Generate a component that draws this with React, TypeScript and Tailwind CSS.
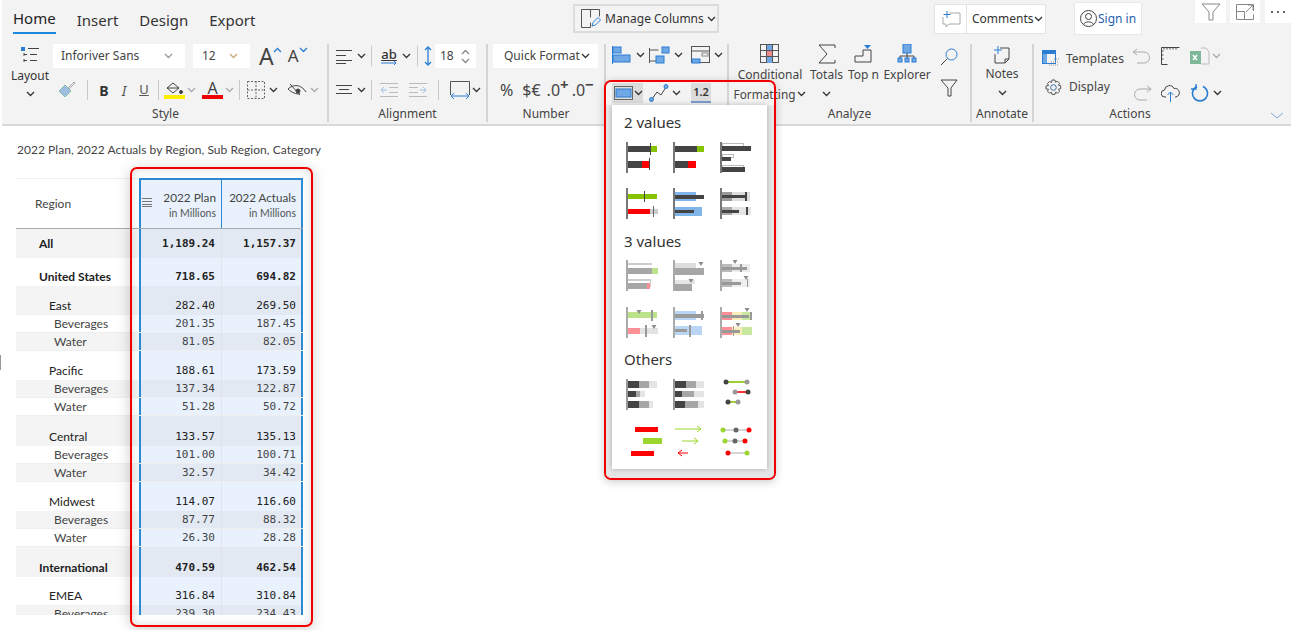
import React from "react";

const ui = "font-['Noto_Sans',sans-serif]";
const tableFont = "font-['Lato',sans-serif]";
const mono = "font-['DejaVu_Sans_Mono',monospace]";

const BLUE = "#2b7cd3";
const FILL = "#6fa8e4";
const INK = "#444";

const Chev = ({ c = "#333", className = "" }: { c?: string; className?: string }) => (
	<svg width="9" height="6" viewBox="0 0 9 6" className={`shrink-0 ${className}`}>
		<path d="M1 1l3.5 3.5L8 1" fill="none" stroke={c} strokeWidth="1.3" />
	</svg>
);

const Sep = ({ className = "" }: { className?: string }) => (
	<div className={`w-[1px] h-[20px] bg-[#c8c8c8] shrink-0 ${className}`} />
);

const Ico = ({ w, h, className = "", children }: { w: number; h: number; className?: string; children: React.ReactNode }) => (
	<svg width={w} height={h} viewBox={`0 0 ${w} ${h}`} fill="none" stroke={INK} strokeWidth="1" className={`shrink-0 ${className}`}>
		{children}
	</svg>
);

const Group = ({ className, label, labelClass = "", children }: { className: string; label?: string; labelClass?: string; children: React.ReactNode }) => (
	<div className={`flex flex-col shrink-0 h-[78px] border-r-2 border-[#d4d4d4] ${className}`}>
		<div className="h-[60px] flex">{children}</div>
		{label && <div className={`h-[18px] text-center text-[12px] leading-[20px] text-[#444] ${labelClass}`}>{label}</div>}
	</div>
);

// ---- mini charts in the dropdown ----
const D = "#444";
const M = "#a6a6a6";
const L = "#e4e4e4";
const G = "#86c400";
const R = "#ff0000";
const LG = "#bde38a";
const LR = "#ff8f97";
const LB = "#b9d7f5";
const B = "#7fb5e8";

type Rect = (number | string)[];

const Bars = ({ items, axis = "#777" }: { items: Rect[]; axis?: string }) => (
	<>
		<rect x="0" y="0" width="2" height="31" fill={axis} />
		{items.map((r, i) => (
			<rect key={i} x={r[0]} y={r[1]} width={r[2]} height={r[3]} fill={String(r[4])} />
		))}
	</>
);

const Tri = ({ x, y }: { x: number; y: number }) => <path d={`M${x - 2.5} ${y}h5l-2.5 4z`} fill="#8c8c8c" />;
const Chart = ({ children }: { children: React.ReactNode }) => (
	<svg width="40" height="31" viewBox="0 0 40 31" className="overflow-visible">
		{children}
	</svg>
);

const Dumb = ({ pts, line, y }: { pts: [number, string][]; line: string; y: number }) => (
	<>
		<line x1={pts[0][0]} x2={pts[pts.length - 1][0]} y1={y} y2={y} stroke={line} strokeWidth="1.6" />
		{pts.map((p, i) => (
			<circle key={i} cx={p[0]} cy={y} r="2.5" fill={p[1]} />
		))}
	</>
);

const Arrow = ({ x1, x2, y, c }: { x1: number; x2: number; y: number; c: string }) => {
	const d = x2 > x1 ? -4 : 4;
	return <path d={`M${x1} ${y}H${x2}m${d} -3l${-d} 3l${d} 3`} fill="none" stroke={c} strokeWidth="1" />;
};

const twoValues = [
	<Bars items={[[2, 4, 23, 6, D], [25, 4, 6, 6, G], [24, 1, 1, 12, D], [2, 19, 14, 7, D], [16, 19, 8, 7, R], [23, 16, 1, 12, D]]} />,
	<Bars items={[[2, 4, 23, 6, D], [24, 4, 7, 6, G], [2, 19, 13, 7, D], [15, 19, 8, 7, R]]} />,
	<Bars items={[[2, 1, 22, 3, "#bbb"], [3, 2, 20, 2, "#fff"], [2, 4, 29, 5, D], [2, 12, 12, 4, "#bbb"], [3, 13, 10, 2, "#fff"], [2, 15, 9, 4, D], [2, 23, 22, 3, "#bbb"], [3, 24, 20, 1, "#fff"], [2, 25, 23, 5, D]]} />,
	<Bars items={[[2, 6, 29, 5, G], [18, 3, 1, 11, D], [2, 21, 22, 5, R], [24, 21, 8, 5, "#ccc"], [27, 18, 1, 11, "#666"]]} />,
	<Bars items={[[2, 4, 21, 9, B], [2, 7, 29, 4, D], [2, 19, 27, 9, B], [2, 22, 19, 3, D]]} />,
	<Bars items={[[2, 4, 28, 9, "#ddd"], [2, 4, 10, 9, "#999"], [2, 7, 25, 3, D], [25, 4, 2, 9, D], [2, 19, 29, 8, L], [2, 19, 10, 8, "#aaa"], [2, 22, 17, 3, D], [26, 19, 2, 8, D]]} />,
];

const threeValues = [
	<Bars axis="#aaa" items={[[2, 3, 24, 2, "#ccc"], [2, 8, 24, 6, M], [26, 8, 6, 6, LG], [2, 19, 22, 2, "#ccc"], [2, 23, 19, 6, M], [21, 23, 3, 6, LR], [24, 19, 1, 8, "#ccc"]]} />,
	<>
		<Bars axis="#aaa" items={[[2, 3, 21, 5, "#ddd"], [2, 8, 29, 7, M], [2, 20, 20, 4, "#e6e6e6"], [2, 24, 17, 7, M]]} />
		<Tri x={28} y={2} />
		<Tri x={18} y={19} />
	</>,
	<>
		<Bars axis="#aaa" items={[[2, 4, 28, 8, "#ebebeb"], [2, 4, 10, 8, "#bbb"], [2, 7, 25, 3, "#999"], [20, 4, 2, 8, "#999"], [2, 19, 28, 8, "#efefef"], [2, 19, 10, 8, "#bbb"], [2, 22, 19, 3, "#999"], [27, 19, 1, 8, "#999"]]} />
		<Tri x={15} y={0} />
		<Tri x={26} y={16} />
	</>,
	<>
		<Bars axis="#aaa" items={[[2, 5, 29, 6, LG], [25, 3, 2, 11, "#999"], [2, 21, 12, 6, LR], [14, 21, 18, 6, "#e2e2e2"], [19, 18, 2, 12, "#999"]]} />
		<Tri x={13} y={3} />
		<Tri x={28} y={18} />
	</>,
	<Bars axis="#aaa" items={[[2, 4, 21, 9, LB], [2, 7, 29, 4, "#9a9a9a"], [28, 4, 2, 9, "#9a9a9a"], [2, 19, 27, 9, LB], [2, 22, 12, 3, "#9a9a9a"], [16, 18, 2, 12, "#9a9a9a"]]} />,
	<>
		<Bars axis="#aaa" items={[[2, 5, 10, 8, LR], [12, 5, 10, 8, "#fbeeb8"], [22, 5, 10, 8, "#c8e8a0"], [2, 8, 27, 3, "#999"], [30, 5, 2, 8, "#999"], [2, 20, 10, 8, LR], [12, 20, 10, 8, "#fbeeb8"], [22, 20, 10, 8, "#c8e8a0"], [2, 23, 18, 3, "#999"], [13, 19, 1, 10, "#999"]]} />
		<Tri x={27} y={1} />
		<Tri x={18} y={16} />
	</>,
];

const others = [
	<Bars axis="#999" items={[[2, 2, 11, 7, D], [13, 2, 10, 7, M], [23, 2, 8, 7, L], [2, 12, 8, 6, D], [10, 12, 4, 6, M], [14, 12, 5, 6, L], [2, 22, 11, 7, D], [13, 22, 10, 7, M], [23, 22, 4, 7, L]]} />,
	<Bars axis="#999" items={[[2, 2, 11, 7, D], [13, 2, 10, 7, M], [23, 2, 8, 7, L], [2, 12, 7, 6, D], [9, 12, 12, 6, M], [21, 12, 10, 6, L], [2, 22, 10, 7, D], [12, 22, 13, 7, M], [25, 22, 6, 7, L]]} />,
	<>
		<Dumb y={3} line={G} pts={[[6, D], [27, "#999"]]} />
		<Dumb y={13} line={R} pts={[[15, "#999"], [28, D]]} />
		<Dumb y={23} line={G} pts={[[8, D], [18, "#999"]]} />
	</>,
	<>
		<rect x="9" y="0" width="23" height="5" fill={R} />
		<rect x="17" y="11" width="19" height="6" fill="#9bd62f" />
		<rect x="5" y="24" width="23" height="5" fill={R} />
	</>,
	<>
		<Arrow x1={2} x2={28} y={2} c="#9bd62f" />
		<Arrow x1={9} x2={25} y={14} c="#9bd62f" />
		<Arrow x1={15} x2={5} y={26} c={R} />
	</>,
	<>
		<Dumb y={3} line="#ccc" pts={[[3, "#9bd62f"], [16, "#666"], [29, R]]} />
		<Dumb y={14} line="#ccc" pts={[[5, "#9bd62f"], [15, "#666"], [25, R]]} />
		<Dumb y={26} line="#ccc" pts={[[8, R], [27, "#9bd62f"]]} />
	</>,
];

const ChartGrid = ({ charts, top, gap }: { charts: React.ReactNode[]; top: string; gap: string }) => (
	<div className={`grid grid-cols-[47px_47px_47px] ${top} ${gap}`}>
		{charts.map((c, i) => (
			<Chart key={i}>{c}</Chart>
		))}
	</div>
);

const ChartMenu = () => (
	<div className={`absolute left-[612px] top-[105px] w-[155px] h-[364px] bg-white shadow-[0_0_5px_rgba(0,0,0,0.25)] pl-[14px] pt-[7px] ${ui}`}>
		<div className="h-[20px] -ml-[2px] text-[15px] leading-[20px] text-[#333]">2 values</div>
		<ChartGrid charts={twoValues} top="mt-[10px]" gap="gap-y-[15px]" />
		<div className="h-[20px] -ml-[2px] mt-[12px] text-[15px] leading-[20px] text-[#333]">3 values</div>
		<ChartGrid charts={threeValues} top="mt-[9px]" gap="gap-y-[16px]" />
		<div className="h-[20px] -ml-[2px] mt-[11px] text-[15px] leading-[20px] text-[#333]">Others</div>
		<ChartGrid charts={others} top="mt-[10px]" gap="gap-y-[17px]" />
	</div>
);

// ---- table ----
const rows: { l: string; p: string; a: string; h: string; pad: string; kind: "top" | "mid" | "leaf"; shade: boolean }[] = [
	{ l: "All", p: "1,189.24", a: "1,157.37", h: "h-[29px]", pad: "pb-[6px]", kind: "top", shade: true },
	{ l: "United States", p: "718.65", a: "694.82", h: "h-[28px]", pad: "pb-[1px]", kind: "top", shade: false },
	{ l: "East", p: "282.40", a: "269.50", h: "h-[29px]", pad: "pb-[1px]", kind: "mid", shade: true },
	{ l: "Beverages", p: "201.35", a: "187.45", h: "h-[18px]", pad: "", kind: "leaf", shade: false },
	{ l: "Water", p: "81.05", a: "82.05", h: "h-[18px]", pad: "", kind: "leaf", shade: true },
	{ l: "Pacific", p: "188.61", a: "173.59", h: "h-[29px]", pad: "pb-[1px]", kind: "mid", shade: false },
	{ l: "Beverages", p: "137.34", a: "122.87", h: "h-[18px]", pad: "", kind: "leaf", shade: true },
	{ l: "Water", p: "51.28", a: "50.72", h: "h-[18px]", pad: "", kind: "leaf", shade: false },
	{ l: "Central", p: "133.57", a: "135.13", h: "h-[30px]", pad: "pb-[1px]", kind: "mid", shade: true },
	{ l: "Beverages", p: "101.00", a: "100.71", h: "h-[18px]", pad: "", kind: "leaf", shade: false },
	{ l: "Water", p: "32.57", a: "34.42", h: "h-[18px]", pad: "", kind: "leaf", shade: true },
	{ l: "Midwest", p: "114.07", a: "116.60", h: "h-[29px]", pad: "pb-[1px]", kind: "mid", shade: false },
	{ l: "Beverages", p: "87.77", a: "88.32", h: "h-[18px]", pad: "", kind: "leaf", shade: true },
	{ l: "Water", p: "26.30", a: "28.28", h: "h-[18px]", pad: "", kind: "leaf", shade: false },
	{ l: "International", p: "470.59", a: "462.54", h: "h-[30px]", pad: "pb-[1px]", kind: "top", shade: true },
	{ l: "EMEA", p: "316.84", a: "310.84", h: "h-[28px]", pad: "pb-[1px]", kind: "mid", shade: false },
	{ l: "Beverages", p: "239.30", a: "234.43", h: "h-[18px]", pad: "", kind: "leaf", shade: true },
];

const labelClass = { top: "pl-[23px] font-bold text-[#222]", mid: "pl-[33px] text-[#222]", leaf: "pl-[38px] text-[#444]" };
const numClass = { top: "font-bold text-[#222]", mid: "text-[#222]", leaf: "text-[#444]" };

const Table = () => (
	<div className={`ml-[16px] mt-[19px] w-[287px] h-[437px] overflow-hidden text-[12px] ${tableFont}`}>
		<div className="flex h-[51px] border-b border-[#aaa]">
			<div className="w-[123px] border-t border-[#eee] flex items-center pl-[19px] text-[#444]">Region</div>
			<div className="w-[83px] border-2 border-b-0 border-r border-[#2d8bd6] bg-[#e8f1fc] flex flex-col items-end pr-[5px] pt-[9px] relative">
				<svg width="11" height="9" viewBox="0 0 11 9" className="absolute left-[1px] top-[18px]" stroke="#777" strokeWidth="1">
					<path d="M0 .5h10M0 3.5h10M0 6.5h10M0 8.5h10" />
				</svg>
				<span className="leading-[18px] text-[11.8px] text-[#444]">2022 Plan</span>
				<span className="text-[10.5px] leading-[12px] text-[#555]">in Millions</span>
			</div>
			<div className="w-[81px] border-t-2 border-r-2 border-[#2d8bd6] bg-[#e8f1fc] flex flex-col items-end pr-[5px] pt-[9px]">
				<span className="leading-[18px] text-[11.6px] text-[#444]">2022 Actuals</span>
				<span className="text-[10.5px] leading-[12px] text-[#555]">in Millions</span>
			</div>
		</div>
		{rows.map((r, i) => (
			<div key={i} className={`flex ${r.h} ${r.kind === "leaf" ? "border-b border-[#eee]" : ""}`}>
				<div className={`w-[123px] flex items-end ${r.pad} ${r.kind === "leaf" ? "items-center" : ""} ${r.shade ? "bg-[#f4f4f4]" : "bg-white"} ${labelClass[r.kind]}`}>
					<span className="leading-[16px]">{r.l}</span>
				</div>
				<div className={`w-[83px] border-l-2 border-r border-l-[#2d8bd6] border-r-[#dde4ee] flex items-end justify-end pr-[6px] ${r.pad} ${r.kind === "leaf" ? "items-center" : ""} ${r.shade ? "bg-[#e2e9f2]" : "bg-[#e8f1fc]"}`}>
					<span className={`${mono} text-[11px] leading-[16px] ${numClass[r.kind]}`}>{r.p}</span>
				</div>
				<div className={`w-[81px] border-r-2 border-[#2d8bd6] flex items-end justify-end pr-[5px] ${r.pad} ${r.kind === "leaf" ? "items-center" : ""} ${r.shade ? "bg-[#e2e9f2]" : "bg-[#e8f1fc]"}`}>
					<span className={`${mono} text-[11px] leading-[16px] ${numClass[r.kind]}`}>{r.a}</span>
				</div>
			</div>
		))}
	</div>
);

// ---- ribbon ----
const Ribbon = () => (
	<div className={`h-[126px] ml-[2px] bg-[#f3f3f3] border-b-2 border-[#d8d8d8] text-[#333] ${ui}`}>
		<div className="h-[44px] flex -ml-[2px]">
			<div className="w-[573px] pl-[13px] flex gap-[21px] shrink-0 text-[15px] text-[#333]">
				<div className="h-[34px] flex items-end pb-[3px] border-b-2 border-[#1f86de] text-[#222]">Home</div>
				<div className="h-[34px] flex items-end pb-[3px]">Insert</div>
				<div className="h-[34px] flex items-end pb-[3px]">Design</div>
				<div className="h-[34px] flex items-end pb-[3px]">Export</div>
			</div>
			<div className="w-[146px] h-[29px] mt-[4px] border-2 border-[#dcdcdc] flex items-center pl-[6px] text-[12px] shrink-0">
				<Ico w={20} h={19} className="mr-[4px]">
					<path d="M9.5 13.5v5h-9V.5h18v7M9.5.5v8" stroke="#555" />
					<path d="M11 17l1-3.500 5-5 2.500 2.500-5 5z" stroke={BLUE} />
				</Ico>
				Manage Columns
				<Chev className="ml-[3px]" />
			</div>
			<div className="ml-[215px] mt-[4px] w-[112px] h-[30px] border border-[#e4e4e4] bg-white flex items-center text-[12px] shrink-0">
				<div className="w-[32px] h-full border-r border-[#e4e4e4] flex items-center justify-center">
					<Ico w={20} h={18}>
						<path d="M8 3H19v11H8l-3 3v-3H2V7" stroke="#aaa" />
						<path d="M6 1v7M2.500 4.500H9.500" stroke={BLUE} />
					</Ico>
				</div>
				<span className="ml-[5px]">Comments</span>
				<Chev />
			</div>
			<div className="ml-[28px] mt-[2px] w-[68px] h-[33px] border border-[#e8e8e8] bg-white flex items-center pl-[5px] text-[12px] text-[#1f5fae] shrink-0">
				<Ico w={17} h={17} className="mr-[1px]">
					<circle cx="8.500" cy="8.500" r="8" />
					<circle cx="8.500" cy="6.500" r="3" />
					<path d="M3.500 14.500c1-3.500 9-3.500 10 0" />
				</Ico>
				Sign in
			</div>
			<div className="ml-[53px] w-[31px] h-[23px] bg-white flex items-center justify-center shrink-0">
				<Ico w={20} h={18}>
					<path d="M1 1h18l-7 8v8h-4V9z" stroke="#888" />
				</Ico>
			</div>
			<div className="ml-[4px] w-[30px] h-[23px] bg-white flex items-center justify-center shrink-0">
				<Ico w={18} h={16}>
					<path d="M17.500 7V.5H.5v15H17.500v-5M.5 7.500h8v8M10 8l7-7M12 1h5v5" stroke="#888" />
				</Ico>
			</div>
			<div className="ml-[5px] w-[26px] h-[23px] bg-white flex items-center justify-center gap-[4px] shrink-0">
				<div className="w-[2px] h-[2px] bg-[#666]" />
				<div className="w-[2px] h-[2px] bg-[#666]" />
				<div className="w-[2px] h-[2px] bg-[#666]" />
			</div>
		</div>

		<div className="flex ml-[8px]">
			<Group className="w-[319px]" label="Style" labelClass="pr-[6px]">
				<div className="w-[40px] flex flex-col items-center shrink-0">
					<Ico w={20} h={20} className="mt-[1px]">
						<rect x="1" y="2" width="4" height="4" fill={BLUE} stroke="none" />
						<path d="M8 3.500h11M4 9.500h3M10 9.500h7M4 15.500h3M10 15.500h7M4 8v3M4 14v3" />
					</Ico>
					<div className="text-[12px] leading-[16px] mt-[3px]">Layout</div>
					<Chev className="mt-[7px]" />
				</div>
				<div className="ml-[3px] flex flex-col">
					<div className="flex items-center h-[24px]">
						<div className="w-[132px] h-[24px] bg-white flex items-center pl-[8px] text-[12px] text-[#444]">
							Inforiver Sans
							<Chev c="#999" className="ml-auto mr-[12px]" />
						</div>
						<div className="ml-[8px] w-[57px] h-[24px] bg-white flex items-center pl-[9px] text-[12px] text-[#444]">
							12
							<Chev c="#c4a97c" className="ml-auto mr-[12px]" />
						</div>
						<div className="ml-[9px] text-[23px] leading-[24px] text-[#444] flex items-start">
							A<Chev className="-ml-[1px] mt-[3px] rotate-180" c={BLUE} />
						</div>
						<div className="ml-[6px] text-[17px] leading-[24px] text-[#444] flex items-start">
							A<Chev className="mt-[3px]" c={BLUE} />
						</div>
					</div>
					<div className="flex items-center h-[24px] mt-[10px]">
						<Ico w={18} h={18} className="ml-[5px]">
							<path d="M1 10l6-6 6 6-6 6z" fill="#9dc0e2" stroke="#8ba" />
							<path d="M10 7l6-6 1 1-6 6" stroke="#aaa" />
						</Ico>
						<Sep className="ml-[11px]" />
						<div className="ml-[6px] w-[20px] text-center text-[14px] font-bold">B</div>
						<div className="w-[20px] text-center text-[14px] italic text-[#555]">I</div>
						<div className="w-[20px] text-center text-[13px] underline text-[#555]">U</div>
						<Sep className="ml-[4px]" />
						<div className="ml-[5px] w-[21px] flex flex-col">
							<Ico w={21} h={14}>
								<path d="M3 7l6-5 6 5-6 5z" />
								<path d="M3 7h12" />
								<circle cx="17" cy="11" r="1.500" fill="#444" />
							</Ico>
							<div className="h-[4px] bg-[#ffee00]" />
						</div>
						<Chev c="#aaa" className="ml-[2px]" />
						<div className="ml-[6px] w-[21px] flex flex-col items-center">
							<div className="text-[16px] leading-[14px] text-[#444]">A</div>
							<div className="w-full h-[4px] bg-[#f00000]" />
						</div>
						<Chev c="#aaa" className="ml-[2px]" />
						<Sep className="ml-[5px]" />
						<Ico w={18} h={18} className="ml-[7px]">
							<path d="M.5.5h17v17H.5zM9 .5v17M.5 9h17" strokeDasharray="2 1.500" stroke="#666" />
						</Ico>
						<Chev className="ml-[4px]" />
						<Ico w={20} h={14} className="ml-[9px]">
							<path d="M1 6c5-5 13-5 18 3M1 6c4 4 8 5 12 5M3 1l10 11" />
							<circle cx="11" cy="8" r="2" fill="#444" />
						</Ico>
						<Chev c="#aaa" className="ml-[3px]" />
					</div>
				</div>
			</Group>

			<Group className="w-[159px]" label="Alignment">
				<div className="ml-[7px] flex flex-col">
					<div className="flex items-center h-[24px]">
						<Ico w={16} h={16}>
							<path d="M0 2.500h16M0 7.500h10M0 12.500h16M0 15.500h10" />
						</Ico>
						<Chev className="ml-[5px]" />
						<Sep className="ml-[5px]" />
						<div className="ml-[9px] w-[16px] flex flex-col items-center">
							<div className="text-[13px] leading-[13px] font-medium underline">ab</div>
							<Ico w={16} h={4}>
								<path d="M0 2h15M13 0l2 2-2 2" stroke={BLUE} />
							</Ico>
						</div>
						<Chev className="ml-[5px]" />
						<Sep className="ml-[6px]" />
						<Ico w={10} h={20} className="ml-[5px]">
							<path d="M5 1v18M2 4l3-3 3 3M2 16l3 3 3-3" stroke={BLUE} strokeWidth="1.300" />
						</Ico>
						<div className="ml-[2px] w-[41px] h-[24px] bg-white flex items-center pl-[5px] text-[12px] text-[#444]">
							18
							<div className="ml-auto mr-[6px] flex flex-col gap-[3px]">
								<Chev c="#888" className="rotate-180" />
								<Chev c="#888" />
							</div>
						</div>
					</div>
					<div className="flex items-center h-[24px] mt-[10px]">
						<Ico w={16} h={14}>
							<path d="M0 2.500h16M3 6.500h10M0 10.500h16" />
						</Ico>
						<Chev className="ml-[5px]" />
						<Sep className="ml-[5px]" />
						<Ico w={18} h={16} className="ml-[8px]">
							<path d="M0 1.500h18M9 5.500h9M9 10.500h9M0 14.500h18" stroke="#bbb" />
							<path d="M7 8H1M4 5L1 8l3 3" stroke="#9dc0e2" />
						</Ico>
						<Ico w={18} h={16} className="ml-[11px]">
							<path d="M0 1.500h18M0 5.500h9M0 10.500h9M0 14.500h18" stroke="#bbb" />
							<path d="M11 8h6M14 5l3 3-3 3" stroke="#9dc0e2" />
						</Ico>
						<Sep className="ml-[11px]" />
						<Ico w={20} h={18} className="ml-[11px]">
							<path d="M.5 14V.5h19V14" stroke="#555" />
							<path d="M1 15h18M4 12l-3 3 3 3M16 12l3 3-3 3" stroke={BLUE} />
						</Ico>
						<Chev className="ml-[2px]" />
					</div>
				</div>
			</Group>

			<Group className="w-[118px]" label="Number">
				<div className="ml-[5px] flex flex-col">
					<div className="w-[105px] h-[24px] bg-white flex items-center pl-[11px] text-[12px] text-[#444]">
						Quick Format
						<Chev className="ml-[1px]" />
					</div>
					<div className="mt-[10px] h-[24px] flex items-center text-[16px] text-[#444] pl-[7px]">
						<span>%</span>
						<span className="ml-[9px]">$€</span>
						<span className="ml-[6px]">
							.0<span className="text-[15px] font-bold align-super leading-[0]">+</span>
						</span>
						<span className="ml-[3px]">
							.0<span className="text-[15px] font-bold align-super leading-[0]">−</span>
						</span>
					</div>
				</div>
			</Group>

			<Group className="w-[123px]">
				<div className="flex flex-col">
					<div className="flex items-center h-[24px]">
						<Ico w={20} h={18} className="ml-[6px]">
							<path d="M.5 0v18" stroke={BLUE} />
							<rect x="1" y="1" width="8" height="6" fill={FILL} stroke={BLUE} />
							<rect x="1" y="9" width="17" height="7" fill={FILL} stroke={BLUE} />
						</Ico>
						<Chev className="ml-[4px]" />
						<Ico w={22} h={18} className="ml-[4px]">
							<path d="M.5 2v15M.5 4h9M.5 15h7" stroke="#555" />
							<rect x="13" y="1" width="7" height="6" fill={FILL} stroke={BLUE} />
							<rect x="7" y="10" width="8" height="7" fill={FILL} stroke={BLUE} />
						</Ico>
						<Chev className="ml-[3px]" />
						<Ico w={20} h={18} className="ml-[8px]">
							<rect x=".5" y=".5" width="18" height="16" stroke="#555" />
							<path d="M.5 5h18" stroke="#555" />
							<rect x="11" y="7" width="6" height="3" stroke="#888" />
							<rect x="1" y="13" width="8" height="4" fill={FILL} stroke={BLUE} />
						</Ico>
						<Chev className="ml-[3px]" />
					</div>
					<div className="flex items-center h-[24px] mt-[15px]">
						<div className="ml-[6px] w-[31px] h-[20px] bg-[#dcdcdc] flex items-center pl-[2px]">
							<Ico w={19} h={14}>
								<rect x=".5" y=".5" width="18" height="13" stroke="#666" />
								<rect x="2" y="3" width="15" height="8" fill={FILL} stroke={BLUE} />
							</Ico>
							<Chev className="ml-[1px]" />
						</div>
						<Ico w={20} h={18} className="ml-[6px]">
							<path d="M3 15l5-7 4 3 5-8" stroke="#444" />
							<circle cx="2.500" cy="15.500" r="2" fill={FILL} stroke={BLUE} />
							<circle cx="17" cy="2.500" r="2" fill={FILL} stroke={BLUE} />
						</Ico>
						<Chev className="ml-[3px]" />
						<div className="ml-[10px] w-[20px] h-[20px] bg-[#dcdcdc] text-center text-[11px] leading-[17px] font-semibold border-b-2 border-[#7c9ccc]">1.2</div>
					</div>
				</div>
			</Group>

			<Group className="w-[243px]" label="Analyze">
				<div className="w-[82px] flex flex-col items-center shrink-0">
					<Ico w={20} h={20}>
						<rect x=".5" y=".5" width="18" height="18" stroke="#555" />
						<rect x="7" y="1" width="6" height="18" fill={FILL} stroke="none" />
						<rect x="7" y="7" width="6" height="6" fill="#ef8a8a" stroke="none" />
						<path d="M.5 6.500h18M.5 12.500h18M6.500 .5v18M12.500 .5v18" stroke="#555" />
					</Ico>
					<div className="text-[12px] leading-[16px] mt-[3px] text-[#444]">Conditional</div>
					<div className="text-[11.8px] leading-[16px] mt-[3px] text-[#444] flex items-center whitespace-nowrap">
						Formatting
						<Chev className="ml-[2px]" />
					</div>
				</div>
				<div className="w-[31px] flex flex-col items-center shrink-0">
					<Ico w={20} h={20}>
						<path d="M18 4V1H2l8 9-8 9h16v-3" />
					</Ico>
					<div className="text-[12px] leading-[16px] mt-[3px] text-[#444]">Totals</div>
					<Chev className="mt-[8px]" />
				</div>
				<div className="ml-[5px] w-[33px] flex flex-col items-center shrink-0">
					<Ico w={20} h={20}>
						<path d="M1 18v-6h8V6h8v12z" />
						<path d="M10 1h7l-3.500 4z" fill={BLUE} stroke="none" />
					</Ico>
					<div className="text-[12px] leading-[16px] mt-[3px] text-[#444] whitespace-nowrap">Top n</div>
				</div>
				<div className="ml-[5px] w-[44px] flex flex-col items-center shrink-0">
					<Ico w={20} h={20}>
						<rect x="6" y="0" width="8" height="9" fill={FILL} stroke={BLUE} />
						<path d="M10 9v5M3 14v-2h14v2" />
						<rect x="1" y="14" width="4" height="4" fill={FILL} stroke={BLUE} />
						<rect x="8" y="14" width="4" height="4" fill={FILL} stroke={BLUE} />
						<rect x="15" y="14" width="4" height="4" fill={FILL} stroke={BLUE} />
					</Ico>
					<div className="text-[12px] leading-[16px] mt-[3px] text-[#444]">Explorer</div>
				</div>
				<div className="ml-[11px] flex flex-col items-center gap-[13px] pt-[4px]">
					<Ico w={18} h={18}>
						<circle cx="11.500" cy="6.500" r="5.500" stroke={BLUE} />
						<path d="M7.500 10.500L1 17" />
					</Ico>
					<Ico w={18} h={18}>
						<path d="M1 1h16l-6 8v8H8V9z" />
					</Ico>
				</div>
			</Group>

			<Group className="w-[62px]" label="Annotate">
				<div className="w-full flex flex-col items-center">
					<Ico w={16} h={18} className="mt-[2px]">
						<path d="M6 2h9v11l-4 4H1V8" />
						<path d="M4 0v8M0 4h8" stroke={BLUE} />
						<path d="M11 17v-4h4" />
					</Ico>
					<div className="text-[12px] leading-[16px] mt-[2px] text-[#444]">Notes</div>
					<Chev className="mt-[8px]" />
				</div>
			</Group>

			<div className="flex flex-col shrink-0 h-[78px] w-[192px]">
				<div className="h-[60px] flex">
					<div className="ml-[8px] pt-[3px] flex flex-col w-[90px] shrink-0">
						<div className="h-[24px] flex items-center text-[12px] text-[#444]">
							<Ico w={18} h={18} className="mr-[6px]">
								<rect x=".5" y=".5" width="13" height="13" stroke={BLUE} />
								<rect x="1" y="1" width="12" height="3" fill={BLUE} stroke="none" />
								<rect x="1" y="4" width="4" height="9" fill={FILL} stroke="none" />
								<path d="M7 15h10M9 12h8M12 9h5" stroke="#999" strokeDasharray="1 1" />
							</Ico>
							Templates
						</div>
						<div className="h-[24px] mt-[4px] flex items-center text-[12px] text-[#444]">
							<Ico w={17} h={17} className="ml-[3px] mr-[7px]">
								<circle cx="8.500" cy="8.500" r="2.800" stroke="#3b6ea5" />
								<path d="M7 1h3l.5 2.200 2-1 2 2-1 2 2.200.5v3l-2.200.5 1 2-2 2-2-1-.5 2.200H7l-.5-2.200-2 1-2-2 1-2L1 10V7l2.500-.5-1-2 2-2 2 1z" stroke="#555" />
							</Ico>
							Display
						</div>
					</div>
					<div className="flex flex-col shrink-0">
						<div className="h-[24px] flex items-center">
							<Ico w={20} h={16}>
								<path d="M5 1L1 4l4 3M1 4h11a5 5 0 010 11H5" stroke="#aaa" />
							</Ico>
							<Ico w={19} h={18} className="ml-[9px]">
								<path d="M18.500 .5H.5v17h6M3 .5v2M6 .5v2M9 .5v2M12 .5v2M15 .5v2M.5 4h2M.5 8h2M.5 12h2" />
							</Ico>
							<Ico w={20} h={18} className="ml-[10px]">
								<rect x="0" y="4" width="11" height="13" fill="#7fb79a" stroke="none" />
								<path d="M11 1h5l3 4v12h-8" stroke="#bbb" />
								<path d="M3 8l4 5M7 8l-4 5" stroke="#fff" strokeWidth="1.500" />
							</Ico>
							<Chev c="#aaa" className="ml-[2px]" />
						</div>
						<div className="h-[24px] mt-[14px] flex items-center">
							<Ico w={20} h={16}>
								<path d="M15 1l4 3-4 3M19 4H8a5 5 0 000 11h7" stroke="#aaa" />
							</Ico>
							<Ico w={19} h={18} className="ml-[9px]">
								<path d="M5 13H4a3.500 3.500 0 01-.5-7A5 5 0 0113 4.500 4 4 0 0115 13h-1" />
								<path d="M9.500 18V8M6.500 11l3-3 3 3" stroke={BLUE} />
							</Ico>
							<Ico w={18} h={18} className="ml-[11px]">
								<path d="M6 2.500A7.500 7.500 0 1012 2.500" stroke={BLUE} strokeWidth="1.600" />
								<path d="M5 0v5H0" stroke={BLUE} strokeWidth="1.300" />
							</Ico>
							<Chev className="ml-[4px]" />
						</div>
					</div>
				</div>
				<div className="h-[18px] text-center text-[12px] leading-[20px] text-[#444]">Actions</div>
			</div>
			<Ico w={14} h={8} className="ml-[44px] mt-[68px]">
				<path d="M1 1l6 5 6-5" stroke="#7aa7d8" />
			</Ico>
		</div>
	</div>
);

const App: React.FC = () => {
	return (
		<div className={`relative w-[1291px] h-[630px] overflow-hidden bg-white ${ui}`}>
			<Ribbon />
			<div className={`pl-[17px] pt-[15px] text-[12px] tracking-[0.04px] leading-[18px] text-[#444] ${tableFont}`}>
				2022 Plan, 2022 Actuals by Region, Sub Region, Category
			</div>
			<Table />

			{/* callouts */}
			<div className="absolute left-[130px] top-[167px] w-[183px] h-[460px] border-2 border-[#f00000] rounded-[7px] shadow-[0_2px_14px_rgba(0,0,0,0.2),inset_0_0_10px_rgba(0,0,0,0.14)]" />
			<div className="absolute left-[604px] top-[80px] w-[172px] h-[400px] border-2 border-[#f00000] rounded-[7px] shadow-[0_2px_8px_rgba(0,0,0,0.2)]" />
			<div className="absolute left-[606px] top-[105px] w-[168px] h-[373px] rounded-b-[5px] bg-[#e6e6e6]" />
			<ChartMenu />
			<div className="absolute left-0 top-[355px] w-[1px] h-[15px] bg-[#999]" />
		</div>
	);
};

export default App;
